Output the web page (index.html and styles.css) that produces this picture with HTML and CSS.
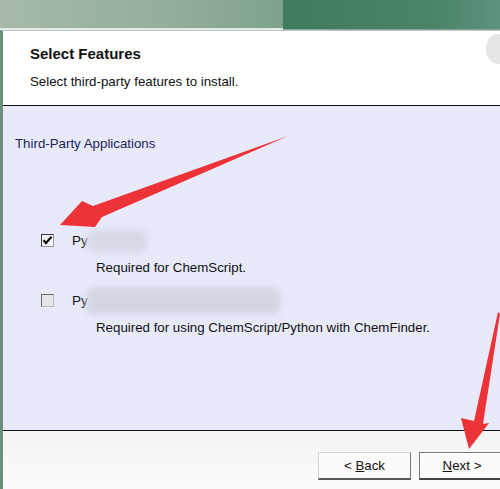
FILE: index.html
```html
<!DOCTYPE html>
<html>
<head>
<meta charset="utf-8">
<link rel="stylesheet" href="styles.css">
</head>
<body>
<div class="screen">
  <div class="topband">
    <div class="tb-left"></div>
    <div class="tb-right"></div>
  </div>
  <div class="window">
    <div class="header">
      <div class="title">Select Features</div>
      <div class="subtitle">Select third-party features to install.</div>
      <div class="corner-icon"></div>
    </div>
    <div class="content">
      <div class="group-label">Third-Party Applications</div>
      <div class="feature first">
        <div class="feature-row">
          <span class="checkbox checked">
            <svg width="11" height="11" viewBox="0 0 11 11"><path d="M1.5 5.2 L4 8 L9.5 1.8" fill="none" stroke="#111" stroke-width="2.2"/></svg>
          </span>
          <span class="name">Py</span>
          <span class="blur b1"></span>
        </div>
        <div class="desc">Required for ChemScript.</div>
      </div>
      <div class="feature">
        <div class="feature-row">
          <span class="checkbox"></span>
          <span class="name">Py</span>
          <span class="blur b2"></span>
        </div>
        <div class="desc">Required for using ChemScript/Python with ChemFinder.</div>
      </div>
    </div>
    <div class="footer">
      <button class="btn back">&lt; <u>B</u>ack</button>
      <button class="btn next"><u>N</u>ext &gt;</button>
    </div>
  </div>
  <svg class="arrows" width="500" height="489" viewBox="0 0 500 489">
    <polygon points="60,225 82,201 93,206 288,136 102,217 95,227" fill="#ee3338"/>
    <polygon points="469,449 461,418 474,421 498,312 500,314 483,424 489,423" fill="#ee3338"/>
  </svg>
</div>
</body>
</html>
```
FILE: styles.css
```css
html, body {
  margin: 0;
  padding: 0;
}
body {
  width: 500px;
  height: 489px;
  overflow: hidden;
  font-family: "Liberation Sans", Arial, sans-serif;
  font-size: 13.3px;
  color: #111;
}
.screen {
  position: relative;
  width: 500px;
  height: 489px;
  display: flex;
  flex-direction: column;
}
.topband {
  height: 30px;
  display: flex;
  flex-shrink: 0;
}
.tb-left {
  width: 283px;
  background: linear-gradient(90deg, #a7b8ab 0%, #92ae9c 60%, #7fa28c 100%);
  border-bottom: 2px solid #e4ebe6;
  box-sizing: border-box;
}
.tb-right {
  flex: 1;
  background: linear-gradient(90deg, #3f7b5f 0%, #4a8469 70%, #5f927b 100%);
  border-bottom: 1px solid #8aa597;
  box-sizing: border-box;
}
.window {
  flex: 1;
  display: flex;
  flex-direction: column;
  border-left: 3px solid #6c8f7d;
  box-shadow: inset 1px 0 0 #2c3f35;
  border-top: 1px solid #bfc6c2;
}
.header {
  position: relative;
  height: 75px;
  background: #fff;
  border-bottom: 1px solid #111;
  padding-left: 27px;
  box-sizing: border-box;
  flex-shrink: 0;
}
.title {
  font-weight: bold;
  font-size: 15px;
  margin-top: 14px;
}
.subtitle {
  margin-top: 12px;
  font-size: 13.3px;
}
.corner-icon {
  position: absolute;
  right: -10px;
  top: 3px;
  width: 24px;
  height: 30px;
  border-radius: 50%;
  background: #e4e6e6;
}
.content {
  height: 325px;
  background: #e8eafa;
  border-bottom: 1px solid #111;
  box-sizing: border-box;
  flex-shrink: 0;
  padding-top: 30px;
}
.group-label {
  margin-left: 12px;
  color: #1d1f5c;
  font-size: 13.3px;
}
.feature {
  margin-left: 38px;
}
.feature.first {
  margin-top: 82px;
}
.feature + .feature {
  margin-top: 18px;
}
.feature-row {
  display: flex;
  align-items: center;
  height: 15px;
}
.checkbox {
  width: 11px;
  height: 11px;
  border: 1px solid #3a3a3a;
  border-right-color: #9a9a9a;
  border-bottom-color: #9a9a9a;
  background: #f2f3f6;
  display: flex;
  align-items: center;
  justify-content: center;
  flex-shrink: 0;
}
.checkbox:not(.checked) {
  border-color: #6a6a6a #b8b8b8 #b8b8b8 #6a6a6a;
  background: #e4e6ea;
}
.name {
  margin-left: 18px;
  font-size: 13.5px;
}
.blur {
  display: block;
  background: #d8dae8;
  filter: blur(3px);
  border-radius: 8px;
}
.blur.b1 {
  width: 62px;
  height: 24px;
  margin-left: -2px;
}
.blur.b2 {
  width: 195px;
  height: 28px;
  margin-left: -2px;
  background: #d4d6e4;
}
.desc {
  margin-left: 55px;
  margin-top: 12px;
  font-size: 13.3px;
}
.footer {
  flex: 1;
  background: linear-gradient(180deg, #f4f5f3, #fafbfa);
  display: flex;
  justify-content: flex-end;
  align-items: flex-start;
  padding-top: 21px;
  gap: 8px;
  margin-right: -5px;
}
.btn {
  font-family: "Liberation Sans", Arial, sans-serif;
  font-size: 13.3px;
  color: #111;
  height: 28px;
  background: #fbfbfb;
  padding: 0;
}
.btn u {
  text-decoration: underline;
}
.back {
  width: 93px;
  border: 1px solid #d4d4d4;
  border-bottom: 2px solid #555;
  border-right: 1px solid #777;
}
.next {
  width: 86px;
  border: 1px solid #777;
  border-bottom: 2px solid #444;
  box-shadow: inset 1px 1px 0 #fff;
}
.arrows {
  position: absolute;
  left: 0;
  top: 0;
  pointer-events: none;
}
```
